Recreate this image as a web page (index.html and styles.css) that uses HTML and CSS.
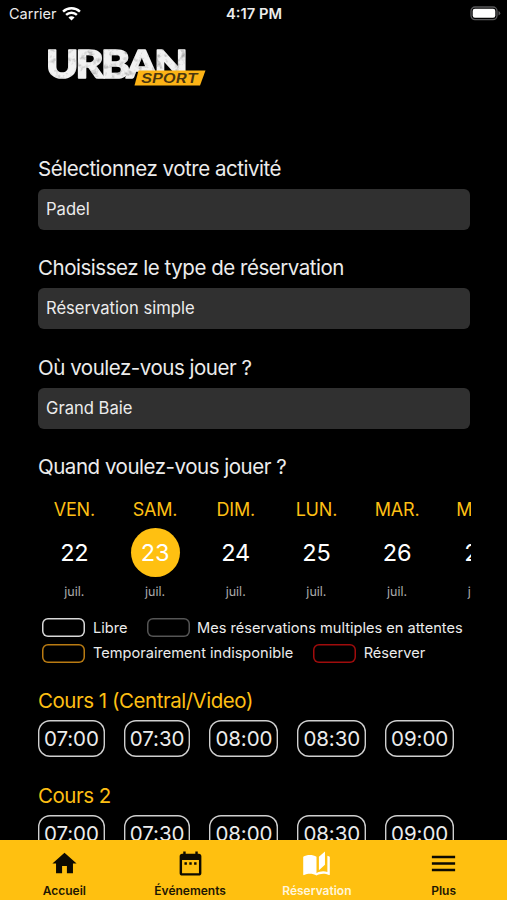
FILE: index.html
```
<!DOCTYPE html>
<html lang="fr">
<head>
  <meta charset="UTF-8" />
  <meta name="viewport" content="width=device-width, initial-scale=1.0"/>
  <title>Urban Sport</title>
  <link rel="stylesheet" href="styles.css">
</head>
<body>

  <!-- Status bar -->
  <header class="status">
    <div class="carrier">
      <span>Carrier</span>
      <svg class="wifi" viewBox="0 0 18 14" fill="none" stroke="#fff" stroke-width="2.3">
        <path d="M1 5.2a11.5 11.5 0 0 1 16 0"/>
        <path d="M3.9 8.3a7.3 7.3 0 0 1 10.2 0"/>
        <path d="M9 13.7L6.1 10.8a4.1 4.1 0 0 1 5.8 0z" fill="#fff" stroke="none"/>
      </svg>
    </div>
    <div class="clock">4:17 PM</div>
    <div class="power">
      <svg class="battery" viewBox="0 0 31 15">
        <rect x="1" y="1" width="26" height="12.6" rx="4" fill="none" stroke="#58585a" stroke-width="1.3"/>
        <rect x="2.7" y="2.8" width="22.6" height="9" rx="2.2" fill="#fff"/>
        <path d="M28.5 5v4.6q1.8-.8 1.8-2.3t-1.8-2.3z" fill="#58585a"/>
      </svg>
    </div>
  </header>

  <main class="content">
    <svg class="logo" viewBox="0 0 164 46">
      <defs>
        <filter id="worn" x="-5%" y="0" width="110%" height="100%">
          <feTurbulence type="fractalNoise" baseFrequency="0.16" numOctaves="3" seed="8" result="noise"/>
          <feColorMatrix in="noise" type="matrix" values="0 0 0 0 .3  0 0 0 0 .3  0 0 0 0 .3  2.4 0 0 0 -1.2" result="spots"/>
          <feComposite in="spots" in2="SourceAlpha" operator="in" result="dirt"/>
          <feMerge>
            <feMergeNode in="SourceGraphic"/>
            <feMergeNode in="dirt"/>
          </feMerge>
        </filter>
      </defs>
      <text class="logo-urban" x="3" y="33" textLength="139" lengthAdjust="spacingAndGlyphs" filter="url(#worn)">URBAN</text>
      <path d="M95.5 25.5h67l-5.5 15h-65.5z" fill="#fcb316"/>
      <text class="logo-sport" x="98" y="37.5" textLength="57" lengthAdjust="spacingAndGlyphs">SPORT</text>
    </svg>

    <section class="field">
      <h2>Sélectionnez votre activité</h2>
      <div class="select">Padel</div>
    </section>
    <section class="field">
      <h2>Choisissez le type de réservation</h2>
      <div class="select">Réservation simple</div>
    </section>
    <section class="field">
      <h2>Où voulez-vous jouer ?</h2>
      <div class="select">Grand Baie</div>
    </section>

    <section class="when">
      <h2>Quand voulez-vous jouer ?</h2>
      <div class="days">
        <div class="day"><b>VEN.</b><span class="num">22</span><small>juil.</small></div>
        <div class="day active"><b>SAM.</b><span class="num">23</span><small>juil.</small></div>
        <div class="day"><b>DIM.</b><span class="num">24</span><small>juil.</small></div>
        <div class="day"><b>LUN.</b><span class="num">25</span><small>juil.</small></div>
        <div class="day"><b>MAR.</b><span class="num">26</span><small>juil.</small></div>
        <div class="day"><b>MER.</b><span class="num">27</span><small>juil.</small></div>
      </div>
    </section>

    <section class="legend">
      <div class="legend-row">
        <div class="key free"><i></i>Libre</div>
        <div class="key pending"><i></i>Mes réservations multiples en attentes</div>
      </div>
      <div class="legend-row">
        <div class="key blocked"><i></i>Temporairement indisponible</div>
        <div class="key booked"><i></i>Réserver</div>
      </div>
    </section>

    <section class="court">
      <h3>Cours 1 (Central/Video)</h3>
      <div class="slots">
        <div class="slot">07:00</div>
        <div class="slot">07:30</div>
        <div class="slot">08:00</div>
        <div class="slot">08:30</div>
        <div class="slot">09:00</div>
      </div>
    </section>
    <section class="court">
      <h3>Cours 2</h3>
      <div class="slots">
        <div class="slot">07:00</div>
        <div class="slot">07:30</div>
        <div class="slot">08:00</div>
        <div class="slot">08:30</div>
        <div class="slot">09:00</div>
      </div>
    </section>
  </main>

  <!-- Bottom navigation -->
  <nav class="tabs">
    <div class="tab">
      <svg viewBox="0 0 24 24"><path d="M10 20v-6h4v6h5v-8h3L12 3 2 12h3v8z"/></svg>
      <span>Accueil</span>
    </div>
    <div class="tab">
      <svg viewBox="0 0 24 24"><path d="M9 11H7v2h2v-2zm4 0h-2v2h2v-2zm4 0h-2v2h2v-2zm2-7h-1V2h-2v2H8V2H6v2H5c-1.11 0-1.99.9-1.99 2L3 20c0 1.1.89 2 2 2h14c1.1 0 2-.9 2-2V6c0-1.1-.9-2-2-2zm0 16H5V9h14v11z"/></svg>
      <span>Événements</span>
    </div>
    <div class="tab current">
      <svg viewBox="0 0 24 24"><path d="M19 2L14 6.5V17.5L19 13V2M6.5 5C4.55 5 2.45 5.4 1 6.5V21.16C1 21.41 1.25 21.66 1.5 21.66C1.6 21.66 1.65 21.59 1.75 21.59C3.1 20.94 5.05 20.5 6.5 20.5C8.45 20.5 10.55 20.9 12 22C13.35 21.15 15.8 20.5 17.5 20.5C19.15 20.5 20.85 20.81 22.25 21.56C22.35 21.61 22.4 21.59 22.5 21.59C22.75 21.59 23 21.34 23 21.09V6.5C22.4 6.05 21.75 5.75 21 5.5V19C19.9 18.65 18.7 18.5 17.5 18.5C15.8 18.5 13.35 19.15 12 20V6.5C10.55 5.4 8.45 5 6.5 5Z"/></svg>
      <span>Réservation</span>
    </div>
    <div class="tab">
      <svg class="menu" viewBox="0 0 24 24"><path d="M3 18h18v-2H3v2zm0-5h18v-2H3v2zm0-7v2h18V6H3z"/></svg>
      <span>Plus</span>
    </div>
  </nav>

</body>
</html>
```
FILE: styles.css
```
* {
  margin: 0;
  padding: 0;
  box-sizing: border-box;
}

body {
  height: 900px;
  display: flex;
  flex-direction: column;
  overflow: hidden;
  background: #000;
  color: #ececec;
  font-family: "Inter", "Liberation Sans", sans-serif;
}

.status {
  flex: none;
  height: 27px;
  padding: 0 6px 0 9px;
  display: grid;
  grid-template-columns: 1fr auto 1fr;
  align-items: center;
  font-size: 14.5px;
}

.carrier {
  display: flex;
  align-items: center;
  gap: 5px;
}

.wifi {
  width: 19px;
  height: 15px;
}

.clock {
  margin-right: 2px;
  font-size: 14.7px;
  font-weight: 600;
}

.power {
  display: flex;
  justify-content: flex-end;
}

.battery {
  width: 31px;
  height: 15px;
}

.content {
  flex: 1;
  min-height: 0;
  padding: 18px 37px 0 38px;
  overflow: hidden;
}

.logo {
  display: block;
  width: 164px;
  height: 46px;
  margin: 0 0 66px 5px;
}

.logo-urban {
  font-family: "Lato", sans-serif;
  font-size: 38px;
  font-weight: 900;
  letter-spacing: -2.5px;
  fill: #f2f2f2;
  stroke: #f2f2f2;
  stroke-width: 1.6px;
  stroke-linejoin: round;
}

.logo-sport {
  font-family: "Inter", sans-serif;
  font-size: 12.5px;
  font-weight: 600;
  font-style: italic;
  fill: #4a3610;
}

h2,
h3 {
  height: 24px;
  font-size: 20.5px;
  font-weight: 400;
  letter-spacing: -0.47px;
  line-height: 24px;
  white-space: nowrap;
}

.field {
  height: 99.4px;
}

.select {
  height: 41px;
  margin-top: 8px;
  padding: 0 8px;
  border-radius: 6px;
  background: #303030;
  font-size: 16.6px;
  line-height: 41px;
}

.days {
  display: flex;
  width: 433px;
  margin-top: 19px;
  overflow: hidden;
}

.day {
  flex: none;
  width: 80.7px;
  display: flex;
  flex-direction: column;
  align-items: center;
}

.day:first-child {
  margin-left: -4px;
}

.day b {
  height: 24px;
  color: #fdbf14;
  font-size: 18px;
  font-weight: 400;
  letter-spacing: -0.2px;
  line-height: 24px;
}

.num {
  width: 49px;
  height: 49px;
  margin-top: 6px;
  border-radius: 50%;
  color: #fff;
  font-size: 23.5px;
  letter-spacing: -0.2px;
  line-height: 49px;
  text-align: center;
}

.active .num {
  background: #ffc011;
}

.day small {
  margin-top: 7px;
  color: #aaa;
  font-size: 12.5px;
  line-height: 16px;
}

.legend {
  margin-top: 18px;
  padding-left: 4px;
}

.legend-row {
  height: 25.5px;
  display: flex;
  gap: 19.5px;
}

.key {
  height: 19px;
  display: flex;
  align-items: center;
  gap: 8px;
  font-size: 14.6px;
  white-space: nowrap;
}

.key i {
  width: 43px;
  height: 19px;
  border-radius: 6px;
  box-shadow: inset 0 0 0 1.5px;
}

.pending {
  gap: 7px;
}

.free i {
  color: #d8d8d8;
}

.pending i {
  color: #555;
}

.blocked i {
  color: #b97b12;
}

.booked i {
  color: #a00c0c;
}

.court {
  height: 95px;
  padding-top: 20px;
}

.court h3 {
  color: #fdbf14;
}

.slots {
  display: flex;
  gap: 19px;
  margin-top: 7px;
}

.slot {
  height: 37px;
  padding: 0 6px;
  border-radius: 12px;
  box-shadow: inset 0 0 0 1.4px #cfcfcf;
  font-size: 20.5px;
  letter-spacing: -0.08px;
  line-height: 37px;
}

.tabs {
  flex: none;
  height: 60px;
  display: grid;
  grid-template-columns: repeat(4, 1fr);
  background: #ffc010;
  color: #1d1703;
}

.tab {
  display: flex;
  flex-direction: column;
  align-items: center;
  padding-top: 9px;
  font-size: 12px;
  font-weight: 600;
}

.tab:first-child {
  padding-left: 2px;
}

.tab svg {
  width: 29px;
  height: 29px;
  fill: #0c0a02;
}

.tab .menu {
  width: 31px;
  height: 31px;
  margin: -1px 0;
}

.tab span {
  margin-top: 5px;
  line-height: 16px;
}

.current {
  color: #fff6dc;
}

.tab.current svg {
  fill: #fff;
}
```
